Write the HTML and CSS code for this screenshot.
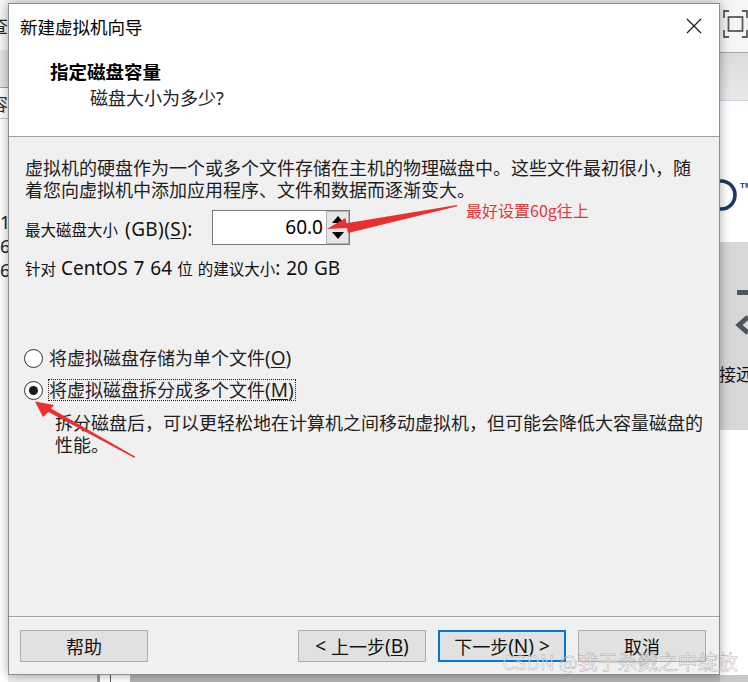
FILE: index.html
```html
<!DOCTYPE html>
<html lang="zh-CN">
<head>
<meta charset="utf-8">
<title>新建虚拟机向导</title>
<link rel="stylesheet" href="styles.css">
</head>
<body>
<div class="screen">
  <aside class="bg-left">
    <div class="bl-top"><span>查</span></div>
    <div class="bl-tab"></div>
    <div class="bl-head"><span>容</span></div>
    <div class="bl-body">
      <span>1</span>
      <span>6</span>
      <span>6</span>
    </div>
  </aside>

  <div class="center">
    <section class="dialog">
      <div class="titlebar">
        <span class="title">新建虚拟机向导</span>
        <svg class="close" width="16" height="16" viewBox="0 0 16 16"><path d="M1 1L15 15M15 1L1 15" stroke="#111" stroke-width="1.1" fill="none"/></svg>
      </div>
      <div class="header">
        <h1>指定磁盘容量</h1>
        <p>磁盘大小为多少?</p>
      </div>
      <div class="content">
        <p class="intro">虚拟机的硬盘作为一个或多个文件存储在主机的物理磁盘中。这些文件最初很小，随<br>着您向虚拟机中添加应用程序、文件和数据而逐渐变大。</p>
        <div class="size-row">
          <label class="size-label">最大磁盘大小 <span class="lat">(GB)(<u>S</u>):</span></label>
          <div class="spin">
            <span class="spin-value">60.0</span>
            <div class="spin-btns"><span class="up"><i></i></span><span class="down"><i></i></span></div>
          </div>
        </div>
        <p class="hint">针对 <span class="lat">CentOS 7 64</span> 位 的建议大小<span class="lat">: 20 GB</span></p>
        <div class="options">
          <div class="radio-row"><span class="radio"></span><span class="rlabel">将虚拟磁盘存储为单个文件<span class="lat">(<u>O</u>)</span></span></div>
          <div class="radio-row"><span class="radio checked"></span><span class="rlabel focus">将虚拟磁盘拆分成多个文件<span class="lat">(<u>M</u>)</span></span></div>
          <p class="desc">拆分磁盘后，可以更轻松地在计算机之间移动虚拟机，但可能会降低大容量磁盘的<br>性能。</p>
        </div>
      </div>
      <div class="footer">
        <button class="btn">帮助</button>
        <div class="nav">
          <button class="btn"><span class="lat">&lt;&nbsp;</span>上一步<span class="lat">(<u>B</u>)</span></button>
          <button class="btn default">下一步<span class="lat">(<u>N</u>) &gt;</span></button>
          <button class="btn">取消</button>
        </div>
      </div>
    </section>
    <div class="bg-bottom">
      <span class="bb-a"></span><span class="bb-b"></span><span class="bb-c"></span><span class="bb-d"></span><span class="bb-e"></span><span class="bb-f"></span>
    </div>
  </div>

  <aside class="bg-right">
    <div class="br-top">
      <svg width="25" height="28" viewBox="0 0 25 28"><path d="M1 8V1H6M19 1H24V8M1 20V27H6M19 27H24V20" stroke="#5a5a5a" stroke-width="1.8" fill="none"/><rect x="5.5" y="7" width="14" height="14" stroke="#5a5a5a" stroke-width="1.8" fill="none"/></svg>
    </div>
    <div class="br-tabs"></div>
    <div class="br-logo">
      <svg width="28" height="141" viewBox="0 0 28 141"><circle cx="1" cy="94" r="14" stroke="#1f3766" stroke-width="3.6" fill="none"/><text x="20" y="87" font-size="8" font-weight="700" fill="#1f3766" font-family="Liberation Sans, sans-serif">TM</text></svg>
    </div>
    <div class="br-panel">
      <svg width="28" height="110" viewBox="0 0 28 110"><rect x="17" y="48" width="11" height="5" fill="#4b5663"/><path d="M28 75L19 83L28 91" stroke="#4b5663" stroke-width="5" fill="none"/></svg>
      <div class="br-text">接远程</div>
    </div>
    <div class="br-white"></div>
    <div class="br-bottom"></div>
  </aside>
</div>

<svg class="marks" width="748" height="682" viewBox="0 0 748 682">
  <polygon points="457,205 457.3,206.2 348,232.9 347,228 327,229 345.4,218.1 346.4,223.2" fill="#e8302f"/>
  <polygon points="135,456.6 134.6,458 48.5,412 43,417 35,401.5 54,405 51,408.5" fill="#e8302f"/>
</svg>
<div class="note">最好设置60g往上</div>
<div class="watermark">CSDN @我于杀戮之中绽放</div>
</body>
</html>
```

FILE: styles.css
```css
* { box-sizing: border-box; }
html, body { margin: 0; padding: 0; }
body {
  width: 748px;
  height: 682px;
  overflow: hidden;
  position: relative;
  background: #fff;
  font-family: "Noto Sans", "Noto Sans CJK SC", sans-serif;
  color: #000;
}
.screen { display: flex; height: 682px; }

/* background window, left strip */
.bg-left { width: 8px; flex: none; display: flex; flex-direction: column; overflow: hidden; background: #fff; }
.bl-top { height: 50px; flex: none; background: #f6f6f6; display: flex; justify-content: flex-end; align-items: center; overflow: hidden; font-size: 18px; color: #222; }
.bl-top span, .bl-head span { flex: none; }
.bl-tab { height: 38px; flex: none; background: #e3e3e3; border-bottom: 1px solid #9e9e9e; }
.bl-head { height: 31px; flex: none; background: #fff; border-bottom: 1px solid #c4c4c4; display: flex; justify-content: flex-end; align-items: center; overflow: hidden; font-size: 18px; color: #333; }
.bl-body { flex: 1; display: flex; flex-direction: column; padding-top: 91px; font-size: 18px; line-height: 24px; color: #222; }

/* center column */
.center { width: 712px; flex: none; display: flex; flex-direction: column; padding-top: 3px; background: #f4f4f4; }
.dialog {
  position: relative;
  z-index: 2;
  height: 672px;
  flex: none;
  border: 1px solid #8c8c8c;
  background: #f0f0f0;
  box-shadow: 0 0 10px rgba(0,0,0,0.35);
  display: flex;
  flex-direction: column;
}
.titlebar { height: 44px; flex: none; background: #fff; display: flex; align-items: center; justify-content: space-between; padding: 0 17px 0 11px; }
.title { font-family: "Noto Sans CJK SC", sans-serif; font-size: 17.5px; }
.header { height: 89px; flex: none; background: #fff; border-bottom: 1px solid #a0a0a0; padding: 12px 0 0 41px; }
.header h1 { margin: 0; font-family: "Noto Sans CJK SC", sans-serif; font-size: 18.5px; font-weight: 700; line-height: 22px; }
.header p { margin: 5px 0 0 40px; font-size: 18px; line-height: 22px; color: #222; }

.content { flex: 1; padding: 20px 16px 0 16px; }
.intro { margin: 0; font-size: 18px; line-height: 22px; color: #1e1e1e; white-space: nowrap; }
.lat { font-family: "Noto Sans", sans-serif; font-size: 19px; }
u { text-decoration: underline; text-underline-offset: 2px; text-decoration-thickness: 1px; }
.size-row { display: flex; align-items: center; height: 35px; margin-top: 9px; }
.size-label { width: 187px; flex: none; font-size: 15.5px; line-height: 22px; padding-top: 3px; color: #111; word-spacing: 3px; }
.size-label .lat { letter-spacing: 0.4px; }
.spin { width: 138px; height: 35px; border: 1px solid #7a7a7a; background: #fff; display: flex; }
.spin-value { flex: 1; text-align: right; padding-right: 3px; font-size: 19px; line-height: 33px; }
.spin-btns { width: 23px; flex: none; background: #e6e6e6; border: 1px solid #b4b4b4; display: flex; flex-direction: column; }
.spin-btns span { flex: 1; display: flex; align-items: center; justify-content: center; }
.spin-btns i { width: 0; height: 0; border-left: 6px solid transparent; border-right: 6px solid transparent; }
.up i { border-bottom: 7px solid #000; }
.down i { border-top: 7px solid #000; }
.hint { margin: 12px 0 0; font-size: 15.5px; line-height: 22px; color: #111; word-spacing: 1px; }
.hint .lat { font-size: 19px; }

.options { margin-top: 67px; }
.radio-row { display: flex; align-items: center; height: 22px; gap: 5px; }
.radio-row + .radio-row { margin-top: 10px; }
.radio { width: 19px; height: 19px; flex: none; margin-left: -1px; border-radius: 50%; border: 1px solid #333; background: #fff; display: flex; align-items: center; justify-content: center; }
.radio.checked::after { content: ""; width: 9px; height: 9px; border-radius: 50%; background: #1a1a1a; }
.rlabel { font-size: 18px; line-height: 20px; border: 1px dotted transparent; padding-right: 1px; color: #1e1e1e; }
.rlabel .lat { line-height: 20px; }
.rlabel.focus { border-color: #222; }
.desc { margin: 11px 0 0 30px; font-size: 18px; line-height: 22px; color: #1e1e1e; white-space: nowrap; }

.footer { height: 58px; flex: none; border-top: 1px solid #a0a0a0; box-shadow: inset 0 1px 0 #fff; display: flex; justify-content: space-between; align-items: flex-start; padding: 13px 13px 0 11px; }
.nav { display: flex; gap: 12px; }
.btn {
  width: 128px; height: 32px; padding: 0;
  background: #e1e1e1; border: 1px solid #adadad;
  font-family: "Noto Sans", "Noto Sans CJK SC", sans-serif; font-size: 18px; color: #111;
  display: flex; align-items: center; justify-content: center;
}
.btn.default { border: 2px solid #0078d7; }

.bg-bottom { flex: 1; display: flex; background: #bdbdbd; }
.bg-bottom span { display: block; }
.bb-a { width: 89px; background: #ececec; }
.bb-b { width: 3px; background: #9a9a9a; }
.bb-c { width: 10px; background: #fff; }
.bb-d { width: 1px; background: #555; }
.bb-e { width: 19px; background: #fff; }
.bb-f { flex: 1; background: #b4b4b4; }

/* background window, right strip */
.bg-right { width: 28px; flex: none; display: flex; flex-direction: column; overflow: hidden; }
.br-top { height: 52px; flex: none; background: #f5f5f5; padding: 10px 0 0 3px; }
.br-top svg { display: block; }
.br-tabs { height: 49px; flex: none; background: linear-gradient(#dcdcdc, #e9e9e9); border-top: 1px solid #a6a6a6; border-bottom: 1px solid #c7d4e2; }
.br-logo { height: 141px; flex: none; background: #fff; }
.br-logo svg, .br-panel svg { display: block; }
.br-panel { height: 188px; flex: none; background: #d7d7d7; }
.br-text { margin: 12px 0 0 -1px; font-family: "Noto Sans CJK SC", sans-serif; font-size: 17px; line-height: 20px; white-space: nowrap; color: #111; }
.br-white { flex: 1; background: #fff; }
.br-bottom { height: 7px; flex: none; background: #c8c8c8; }

/* annotations */
.marks { position: absolute; left: 0; top: 0; z-index: 5; pointer-events: none; }
.note { position: absolute; left: 466px; top: 199px; z-index: 5; font-family: "Noto Sans CJK SC", sans-serif; font-size: 16px; line-height: 22px; color: #e8353b; }
.watermark {
  position: absolute; left: 502px; top: 650px; z-index: 6;
  font-family: "Noto Sans CJK SC", sans-serif; font-size: 20px; line-height: 24px;
  color: rgba(255,255,255,0.5);
  -webkit-text-stroke: 0.5px rgba(100,100,100,0.5);
  white-space: nowrap;
}
```
